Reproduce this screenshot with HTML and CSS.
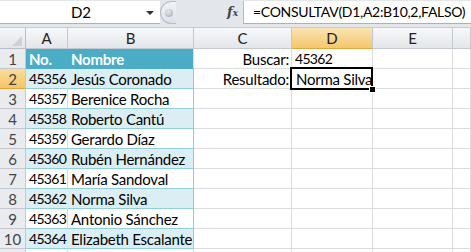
FILE: index.html
```html
<!DOCTYPE html>
<html lang="es">
<head>
    <meta charset="UTF-8">
    <title>CONSULTAV</title>
    <link rel="stylesheet" href="styles.css">
</head>
<body>
    <div class="formula-bar">
        <div class="name-box">
            <span class="name-value">D2</span>
            <span class="name-arrow"></span>
        </div>
        <div class="grip"><span class="grip-dot"></span></div>
        <div class="fx">f<sub>x</sub></div>
        <div class="formula-input">=CONSULTAV(D1,A2:B10,2,FALSO)</div>
    </div>

    <div class="sheet">
        <div class="corner"><span class="corner-tri"></span></div>
        <div class="col-head">A</div>
        <div class="col-head">B</div>
        <div class="col-head">C</div>
        <div class="col-head active">D</div>
        <div class="col-head">E</div>
        <div class="col-head"></div>

        <div class="row-head">1</div>
        <div class="cell t-head t-head-a">No.</div>
        <div class="cell t-head">Nombre</div>
        <div class="cell label">Buscar:</div>
        <div class="cell num">45362</div>
        <div class="cell"></div>
        <div class="cell"></div>

        <div class="row-head active">2</div>
        <div class="cell band band-a num">45356</div>
        <div class="cell band">Jesús Coronado</div>
        <div class="cell label">Resultado:</div>
        <div class="cell selected">Norma Silva<span class="handle"></span></div>
        <div class="cell"></div>
        <div class="cell"></div>

        <div class="row-head">3</div>
        <div class="cell plain num">45357</div>
        <div class="cell plain">Berenice Rocha</div>
        <div class="cell"></div>
        <div class="cell"></div>
        <div class="cell"></div>
        <div class="cell"></div>

        <div class="row-head">4</div>
        <div class="cell band band-a num">45358</div>
        <div class="cell band">Roberto Cantú</div>
        <div class="cell"></div>
        <div class="cell"></div>
        <div class="cell"></div>
        <div class="cell"></div>

        <div class="row-head">5</div>
        <div class="cell plain num">45359</div>
        <div class="cell plain">Gerardo Díaz</div>
        <div class="cell"></div>
        <div class="cell"></div>
        <div class="cell"></div>
        <div class="cell"></div>

        <div class="row-head">6</div>
        <div class="cell band band-a num">45360</div>
        <div class="cell band">Rubén Hernández</div>
        <div class="cell"></div>
        <div class="cell"></div>
        <div class="cell"></div>
        <div class="cell"></div>

        <div class="row-head">7</div>
        <div class="cell plain num">45361</div>
        <div class="cell plain">María Sandoval</div>
        <div class="cell"></div>
        <div class="cell"></div>
        <div class="cell"></div>
        <div class="cell"></div>

        <div class="row-head">8</div>
        <div class="cell band band-a num">45362</div>
        <div class="cell band">Norma Silva</div>
        <div class="cell"></div>
        <div class="cell"></div>
        <div class="cell"></div>
        <div class="cell"></div>

        <div class="row-head">9</div>
        <div class="cell plain num">45363</div>
        <div class="cell plain">Antonio Sánchez</div>
        <div class="cell"></div>
        <div class="cell"></div>
        <div class="cell"></div>
        <div class="cell"></div>

        <div class="row-head">10</div>
        <div class="cell band band-a num">45364</div>
        <div class="cell band">Elizabeth Escalante</div>
        <div class="cell"></div>
        <div class="cell"></div>
        <div class="cell"></div>
        <div class="cell"></div>

        <div class="row-head"></div>
        <div class="cell"></div>
        <div class="cell"></div>
        <div class="cell"></div>
        <div class="cell"></div>
        <div class="cell"></div>
        <div class="cell"></div>
    </div>
</body>
</html>
```

FILE: styles.css
```css
body {
    margin: 0;
    width: 471px;
    height: 252px;
    overflow: hidden;
    background: #fff;
    font-family: "Lato", "Open Sans", sans-serif;
    font-size: 15px;
    color: #000;
}

.formula-bar {
    display: flex;
    height: 28px;
    box-sizing: border-box;
    padding-top: 1px;
    background: #e3e7ec;
    border-bottom: 1px solid #c7ccd3;
}

.formula-bar > div {
    flex-shrink: 0;
}

.name-box {
    position: relative;
    width: 160px;
    height: 23px;
    background: #fff;
    border-bottom: 1px solid #a9b1bb;
    box-sizing: border-box;
    text-align: center;
    line-height: 22px;
}

.name-value {
    display: inline-block;
    padding-left: 2px;
}

.name-arrow {
    position: absolute;
    right: 6px;
    top: 10px;
    border-left: 4px solid transparent;
    border-right: 4px solid transparent;
    border-top: 4px solid #333;
}

.grip {
    width: 16px;
    height: 23px;
    border: 1px solid #b4bbc4;
    border-right: none;
    border-radius: 12px 0 0 12px;
    box-sizing: border-box;
    background: linear-gradient(#f2f4f6, #dde1e6);
    display: flex;
    align-items: center;
    justify-content: center;
}

.grip-dot {
    width: 8px;
    height: 8px;
    border-radius: 50%;
    background: radial-gradient(circle at 40% 35%, #e8eaec, #a4a9ae);
}

.fx {
    width: 67px;
    height: 23px;
    box-sizing: border-box;
    padding-right: 5px;
    text-align: right;
    font-family: "DejaVu Serif", serif;
    font-style: italic;
    font-weight: bold;
    font-size: 13px;
    line-height: 22px;
    color: #444;
}

.fx sub {
    font-size: 9px;
    vertical-align: baseline;
}

.formula-bar > .formula-input {
    flex: 1 1 auto;
    min-width: 0;
    height: 23px;
    background: #fff;
    border-left: 1px solid #b4bbc4;
    border-bottom: 1px solid #a9b1bb;
    box-sizing: border-box;
    padding-left: 9px;
    font-size: 14px;
    line-height: 22px;
    letter-spacing: -0.3px;
    white-space: nowrap;
    overflow: hidden;
}

.sheet {
    display: grid;
    grid-template-columns: 26px 42px 126px 98px 81px 80px 1fr;
    grid-template-rows: 21px repeat(10, 20px) 4px;
}

.sheet > div {
    box-sizing: border-box;
    border-right: 1px solid #dadcdd;
    border-bottom: 1px solid #dadcdd;
    white-space: nowrap;
    overflow: hidden;
}

.corner {
    position: relative;
    background: linear-gradient(#f5f6f8, #e2e5e9);
    border-color: #b9bfc6 !important;
}

.corner-tri {
    position: absolute;
    right: 3px;
    bottom: 2px;
    border-left: 10px solid transparent;
    border-bottom: 10px solid #cdd1d6;
}

.col-head {
    background: linear-gradient(#f7f8fa, #e3e6ea);
    border-color: #c3c8cf !important;
    text-align: center;
    line-height: 20px;
    color: #222;
}

.col-head.active {
    background: linear-gradient(#fbe4b4, #f3c76c);
    border-bottom-color: #e2a73a !important;
}

.row-head {
    background: #e9ebee;
    border-color: #c3c8cf !important;
    text-align: center;
    line-height: 20px;
    color: #444;
}

.row-head.active {
    background: linear-gradient(#f9dc9e, #f4c566);
    border-bottom-color: #e2a73a !important;
}

.cell {
    line-height: 20px;
    padding: 0 3px;
    letter-spacing: -0.25px;
}

.num {
    font-size: 14px;
    letter-spacing: -0.7px;
}

.label {
    text-align: right;
    padding-right: 2px;
}

.t-head {
    background: #4bacc6;
    color: #fff;
    font-weight: bold;
    border-bottom-color: #4bacc6 !important;
    border-right-color: #4bacc6 !important;
}

.t-head + .t-head {
    border-right-color: #dadcdd !important;
}

.band {
    background: #daeef3;
    border-bottom-color: #92cddc !important;
    border-right-color: #92cddc !important;
}

.band-a {
    border-right-color: #daeef3 !important;
}

.plain {
    border-bottom-color: #92cddc !important;
}

.plain + .plain {
    border-right-color: #92cddc !important;
}

.selected {
    position: relative;
    overflow: visible !important;
    padding-left: 4px;
}

.selected::before {
    content: "";
    position: absolute;
    left: -2px;
    top: -2px;
    right: -1px;
    bottom: -2px;
    border: 2px solid #000;
}

.handle {
    position: absolute;
    right: -4px;
    bottom: -5px;
    width: 5px;
    height: 5px;
    background: #000;
    border: 1px solid #fff;
    z-index: 2;
}
```
